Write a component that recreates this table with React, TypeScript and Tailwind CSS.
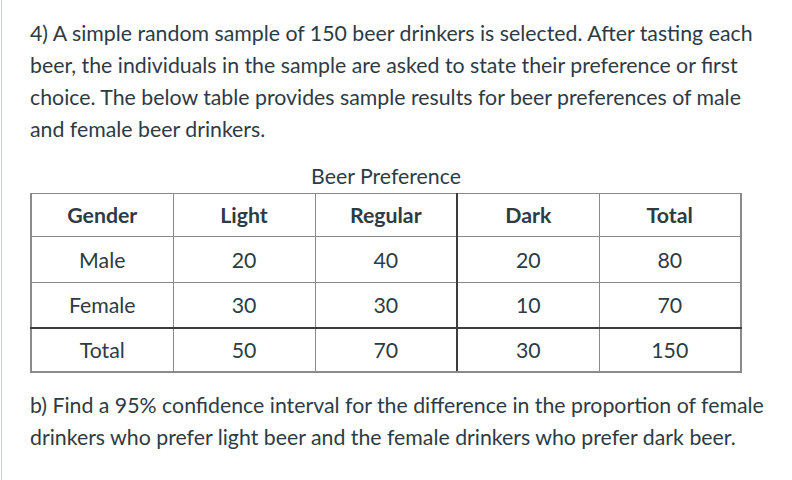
const headers = ["Gender", "Light", "Regular", "Dark", "Total"];

const rows = [
  ["Male", "20", "40", "20", "80"],
  ["Female", "30", "30", "10", "70"],
  ["Total", "50", "70", "30", "150"],
];

function cellClass(col: number, row: number) {
  let c = "w-[142px] border-[#8a8a8a] text-center align-middle p-0";
  c += col === 0 ? " border-l-2" : " border-l";
  if (col === 2) c += " border-r-2 border-r-[#3d3d3d]";
  else if (col === 4) c += " border-r-2";
  else c += " border-r";
  if (row === 0) c += " border-t";
  if (row === 2) c += " border-b-2 border-b-[#3d3d3d]";
  else if (row === 3) c += " border-b-2";
  else c += " border-b";
  return c;
}

export default function App() {
  return (
    <div
      className="ml-[1px] min-h-[480px] w-[791px] border-l border-[#c9ced2] bg-white pl-[28px] pr-[20px] pt-[17px] text-[21.3px] leading-[32px] text-[#2d3b45]"
      style={{ fontFamily: "Lato, 'Liberation Sans', sans-serif" }}
    >
      <p>
        4) A simple random sample of 150 beer drinkers is selected. After tasting each beer,
        the individuals in the sample are asked to state their preference or first choice. The
        below table provides sample results for beer preferences of male and female beer
        drinkers.
      </p>

      <div className="mt-[15px] w-[712px]">
        <div className="text-center leading-[33px]">Beer Preference</div>
        <table className="w-[712px] border-collapse table-fixed">
          <thead>
            <tr className="h-[43px]">
              {headers.map((h, i) => (
                <th key={h} className={cellClass(i, 0) + " font-bold"}>
                  {h}
                </th>
              ))}
            </tr>
          </thead>
          <tbody>
            {rows.map((r, ri) => (
              <tr key={ri} className={ri === 0 ? "h-[46px]" : ri === 1 ? "h-[45px]" : "h-[44px]"}>
                {r.map((v, ci) => (
                  <td key={ci} className={cellClass(ci, ri + 1)}>
                    {v}
                  </td>
                ))}
              </tr>
            ))}
          </tbody>
        </table>
      </div>

      <p className="mt-[16px]">
        b) Find a 95% confidence interval for the difference in the proportion of female
        drinkers who prefer light beer and the female drinkers who prefer dark beer.
      </p>
    </div>
  );
}
